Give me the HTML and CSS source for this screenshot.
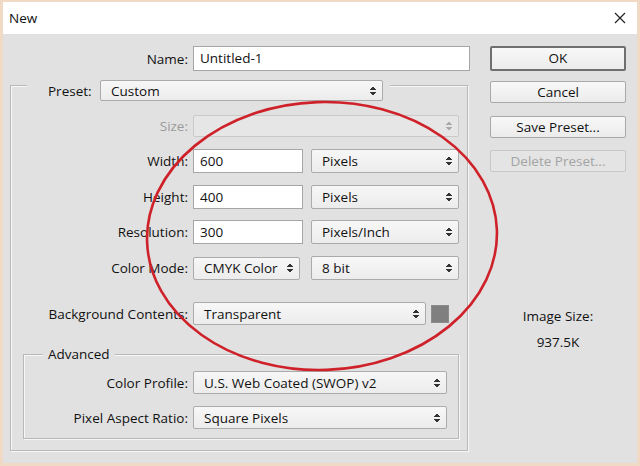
FILE: index.html
```html
<!DOCTYPE html>
<html>
<head>
<meta charset="utf-8">
<link rel="stylesheet" href="styles.css">
</head>
<body>
<div class="window">
  <div class="titlebar">
    <span class="title">New</span>
    <svg class="close" width="12" height="12" viewBox="0 0 12 12"><path d="M1 1L11 11M11 1L1 11" stroke="#222" stroke-width="1.2" fill="none"/></svg>
  </div>
  <div class="body">
    <div class="left">
      <div class="row">
        <span class="lbl lbl-top">Name:</span>
        <div class="input w-name">Untitled-1</div>
      </div>
      <div class="group outer">
        <div class="legend preset-legend">
          <span class="lbl-inline">Preset:</span>
          <div class="select w-preset"><span>Custom</span><span class="spin"></span></div>
        </div>
        <div class="row r-size">
          <span class="lbl lbl-g disabled">Size:</span>
          <div class="select disabled-sel w-size"><span></span><span class="spin"></span></div>
        </div>
        <div class="row r-width">
          <span class="lbl lbl-g">Width:</span>
          <div class="input w-num">600</div>
          <div class="select w-unit"><span>Pixels</span><span class="spin"></span></div>
        </div>
        <div class="row r-height">
          <span class="lbl lbl-g">Height:</span>
          <div class="input w-num">400</div>
          <div class="select w-unit"><span>Pixels</span><span class="spin"></span></div>
        </div>
        <div class="row r-res">
          <span class="lbl lbl-g">Resolution:</span>
          <div class="input w-num">300</div>
          <div class="select w-unit"><span>Pixels/Inch</span><span class="spin"></span></div>
        </div>
        <div class="row r-mode">
          <span class="lbl lbl-g">Color Mode:</span>
          <div class="select w-mode"><span>CMYK Color</span><span class="spin"></span></div>
          <div class="select w-unit"><span>8 bit</span><span class="spin"></span></div>
        </div>
        <div class="row r-bg">
          <span class="lbl lbl-g">Background Contents:</span>
          <div class="select w-bg"><span>Transparent</span><span class="spin"></span></div>
          <div class="swatch"></div>
        </div>
        <div class="group adv">
          <div class="legend adv-legend">Advanced</div>
          <div class="row r-prof">
            <span class="lbl lbl-a">Color Profile:</span>
            <div class="select w-prof"><span>U.S. Web Coated (SWOP) v2</span><span class="spin"></span></div>
          </div>
          <div class="row r-par">
            <span class="lbl lbl-a">Pixel Aspect Ratio:</span>
            <div class="select w-prof"><span>Square Pixels</span><span class="spin"></span></div>
          </div>
        </div>
      </div>
    </div>
    <div class="right">
      <div class="btn btn-default">OK</div>
      <div class="btn b-cancel">Cancel</div>
      <div class="btn b-save">Save Preset...</div>
      <div class="btn b-del disabled-btn">Delete Preset...</div>
      <div class="imgsize">
        <div class="is-label">Image Size:</div>
        <div class="is-value">937.5K</div>
      </div>
    </div>
  </div>
  <svg class="annotation" width="640" height="466" viewBox="0 0 640 466">
    <ellipse cx="322" cy="236" rx="175" ry="134" transform="rotate(-2 322 236)" fill="none" stroke="#cf2129" stroke-width="2.6"/>
  </svg>
</div>
</body>
</html>
```
FILE: styles.css
```css
* { box-sizing: border-box; }
html, body { margin: 0; padding: 0; }
body {
  font-family: "Open Sans", "Noto Sans", sans-serif;
  font-size: 13.5px;
  color: #111;
  background: #efd9c4;
}
.window {
  position: relative;
  width: 640px;
  height: 466px;
  border: 3px solid #f0dac6;
  border-top-width: 2px;
  background: #e1e1e1;
  overflow: hidden;
}
.titlebar {
  height: 32px;
  background: #ffffff;
  display: flex;
  align-items: center;
  justify-content: space-between;
  padding: 0 11px 0 6px;
}
.title { font-size: 13.5px; color: #111; }
.close { display: block; }
.body {
  display: flex;
  gap: 20px;
  padding-top: 12px;
}
.left { width: 467px; }
.right { width: 136px; display: flex; flex-direction: column; }

.row { display: flex; align-items: center; }
.lbl { text-align: right; padding-right: 5px; flex: none; line-height: 16px; }
.lbl-top { width: 190px; }
.lbl-g { width: 182px; }
.lbl-a { width: 169px; }
.disabled { color: #9a9a9a; }

.input {
  background: #fff;
  border: 1px solid #a6a6a6;
  height: 24px;
  line-height: 22px;
  padding-left: 6px;
  flex: none;
}
.w-name { width: 277px; height: 25px; }
.w-num { width: 110px; margin-right: 8px; }

.select {
  display: flex;
  align-items: center;
  justify-content: space-between;
  height: 23px;
  border: 1px solid #ababab;
  border-radius: 2px;
  background: linear-gradient(#f7f7f7, #ececec);
  padding: 0 6px 0 10px;
  flex: none;
  white-space: nowrap;
}
.spin {
  width: 6px;
  height: 10px;
  flex: none;
  background:
    linear-gradient(to bottom right, transparent 50%, #333 50%) left top / 3px 4px no-repeat,
    linear-gradient(to bottom left, transparent 50%, #333 50%) right top / 3px 4px no-repeat,
    linear-gradient(to top right, transparent 50%, #333 50%) left bottom / 3px 4px no-repeat,
    linear-gradient(to top left, transparent 50%, #333 50%) right bottom / 3px 4px no-repeat;
}
.disabled-sel { background: #e6e6e6; border-color: #c9c9c9; }
.disabled-sel .spin {
  background:
    linear-gradient(to bottom right, transparent 50%, #aaa 50%) left top / 3px 4px no-repeat,
    linear-gradient(to bottom left, transparent 50%, #aaa 50%) right top / 3px 4px no-repeat,
    linear-gradient(to top right, transparent 50%, #aaa 50%) left bottom / 3px 4px no-repeat,
    linear-gradient(to top left, transparent 50%, #aaa 50%) right bottom / 3px 4px no-repeat;
}
.w-preset { width: 283px; height: 21px; }
.w-size { width: 266px; height: 22px; }
.w-unit { width: 148px; height: 24px; }
.w-mode { width: 107px; margin-right: 11px; }
.w-bg { width: 233px; margin-right: 5px; }
.w-prof { width: 254px; }
.swatch { width: 18px; height: 18px; background: #7f7f7f; border: 1px solid #8c8c8c; }

.group {
  border: 1px solid #b8b8b8;
  box-shadow: inset 1px 1px 0 #f7f7f7, 1px 1px 0 #f7f7f7;
}
.outer {
  margin: 14px 0 0 7px;
  width: 458px;
  padding-bottom: 11px;
}
.legend {
  background: #e1e1e1;
  display: flex;
  align-items: center;
}
.preset-legend {
  margin: -6px 0 0 16px;
  width: 363px;
  padding-left: 21px;
}
.lbl-inline { width: 52px; flex: none; }
.r-size { margin-top: 14px; }
.r-width { margin-top: 12px; }
.r-height { margin-top: 12px; }
.r-res { margin-top: 11px; }
.r-mode { margin-top: 12px; }
.r-bg { margin-top: 22px; }
.adv {
  margin: 29px 0 0 12px;
  width: 436px;
  padding-bottom: 9px;
}
.adv-legend {
  margin: -9px 0 0 19px;
  width: max-content;
  padding: 0 5px;
  line-height: 17px;
}
.r-prof { margin-top: 8px; }
.r-par { margin-top: 12px; }

.btn {
  height: 22px;
  border: 1px solid #a9a9a9;
  border-radius: 2px;
  background: linear-gradient(#f8f8f8, #ebebeb);
  text-align: center;
  line-height: 20px;
}
.btn-default { height: 25px; border: 2px solid #6f6f6f; line-height: 21px; }
.b-cancel { margin-top: 10px; }
.b-save { margin-top: 13px; }
.b-del { margin-top: 12px; }
.disabled-btn { color: #a3a3a3; border-color: #c8c8c8; background: #e4e4e4; }
.imgsize { margin-top: 135px; text-align: center; }
.is-value { margin-top: 8px; }

.annotation { position: absolute; left: -3px; top: -2px; pointer-events: none; }
```
